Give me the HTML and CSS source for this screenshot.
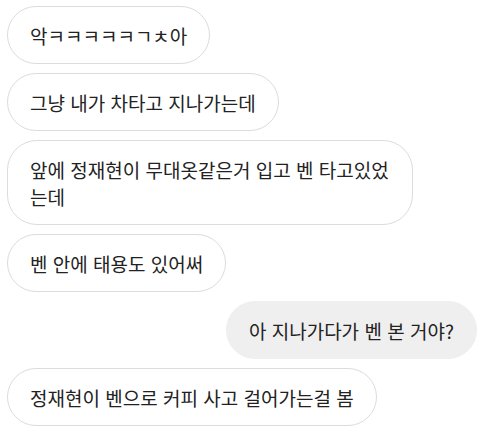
FILE: index.html
```html
<!DOCTYPE html>
<html lang="ko">
<head>
    <meta charset="UTF-8">
    <meta name="viewport" content="width=device-width, initial-scale=1.0">
    <title>Chat</title>
    <link rel="stylesheet" href="styles.css">
</head>
<body>
    <div class="chat">
        <div class="msg in">악ㅋㅋㅋㅋㅋㄱㅊ아</div>
        <div class="msg in">그냥 내가 차타고 지나가는데</div>
        <div class="msg in">앞에 정재현이 무대옷같은거 입고 벤 타고있었는데</div>
        <div class="msg in">벤 안에 태용도 있어써</div>
        <div class="msg out">아 지나가다가 벤 본 거야?</div>
        <div class="msg in">정재현이 벤으로 커피 사고 걸어가는걸 봄</div>
    </div>
</body>
</html>
```

FILE: styles.css
```css
body {
    margin: 0;
    background: #fff;
    font-family: "Noto Sans CJK KR", "Noto Sans", sans-serif;
    color: #222;
}
.chat {
    display: flex;
    flex-direction: column;
    gap: 9px;
    padding: 6px 3px 6px 7px;
}
.msg {
    max-width: 360px;
    padding: 15px 22px 14px;
    font-size: 19px;
    line-height: 27px;
    border-radius: 30px;
}
.in {
    align-self: flex-start;
    border: 1px solid #dcdcdc;
}
.out {
    align-self: flex-end;
    background: #efefef;
    border: 1px solid #efefef;
}
```
